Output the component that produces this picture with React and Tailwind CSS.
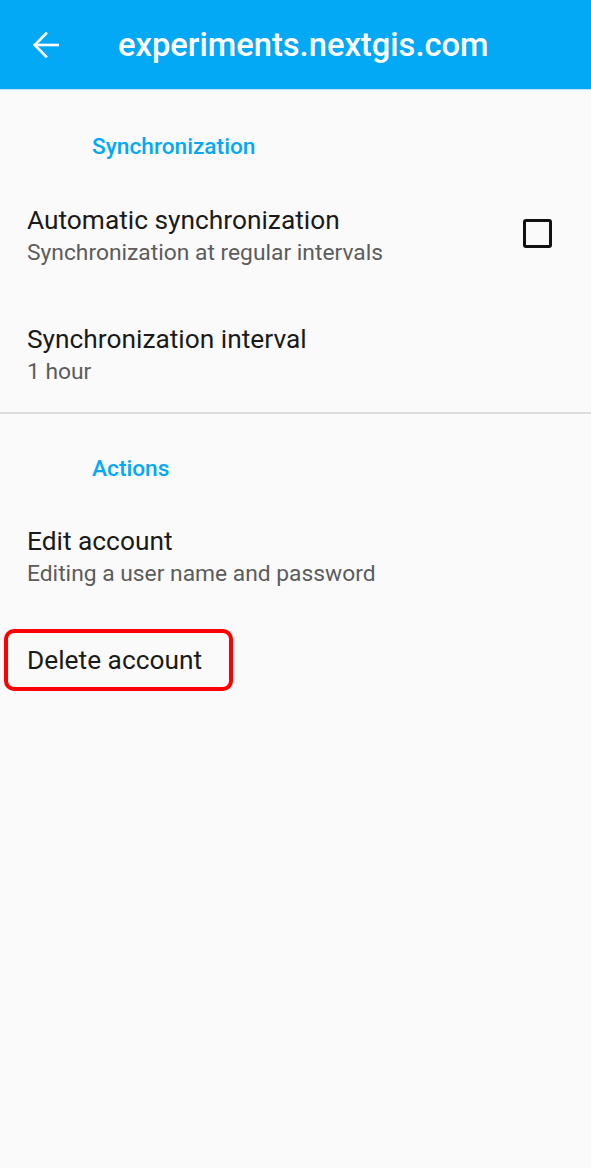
import React from "react";

function Category({ children, className = "" }) {
  return (
    <div className={`pl-[92px] text-[22.7px] leading-[26px] font-medium text-[#03a9f4] ${className}`}>
      {children}
    </div>
  );
}

function Pref({ title, summary, className = "", right = null }) {
  return (
    <div className={`flex items-center justify-between pl-[27px] pr-[39px] ${className}`}>
      <div>
        <div className="text-[26.3px] leading-[32px] text-[#1a1a1a]">{title}</div>
        {summary && <div className="mt-[3px] text-[22.8px] leading-[28px] text-[#5c5c5c]">{summary}</div>}
      </div>
      {right}
    </div>
  );
}

export default function App() {
  return (
    <div className="min-h-[1168px] bg-[#fafafa]" style={{ fontFamily: "Roboto, 'Noto Sans', sans-serif" }}>
      {/* Toolbar */}
      <div className="flex h-[89px] items-center bg-[#03a9f4] pl-[33px]">
        <svg width="26" height="26" viewBox="0 0 26 26" fill="none" stroke="white" strokeWidth="2.6" strokeLinecap="square">
          <path d="M2 13H25" />
          <path d="M13 1.5L1.8 13L13 24.5" strokeLinejoin="miter" />
        </svg>
        <div className="ml-[59px] text-[32.7px] font-medium leading-[38px] text-white">experiments.nextgis.com</div>
      </div>
      <div className="h-[1px] bg-[#c5e6f6]" />

      <Category className="mt-[44px]">Synchronization</Category>
      <Pref
        className="mt-[44px]"
        title="Automatic synchronization"
        summary="Synchronization at regular intervals"
        right={<div className="mb-[4px] h-[29px] w-[29px] rounded-[3px] border-[3px] border-[#111]" />}
      />
      <Pref className="mt-[56px]" title="Synchronization interval" summary="1 hour" />
      <div className="mt-[26px] h-[2px] bg-[#dcdcdc]" />

      <Category className="mt-[42px]">Actions</Category>
      <Pref className="mt-[43px]" title="Edit account" summary="Editing a user name and password" />

      <div className="relative mt-[56px]">
        <Pref title="Delete account" />
        <div className="absolute left-[4px] top-[-15px] h-[62px] w-[229px] rounded-[10px] border-[4px] border-[#ff0000]" />
      </div>
    </div>
  );
}
